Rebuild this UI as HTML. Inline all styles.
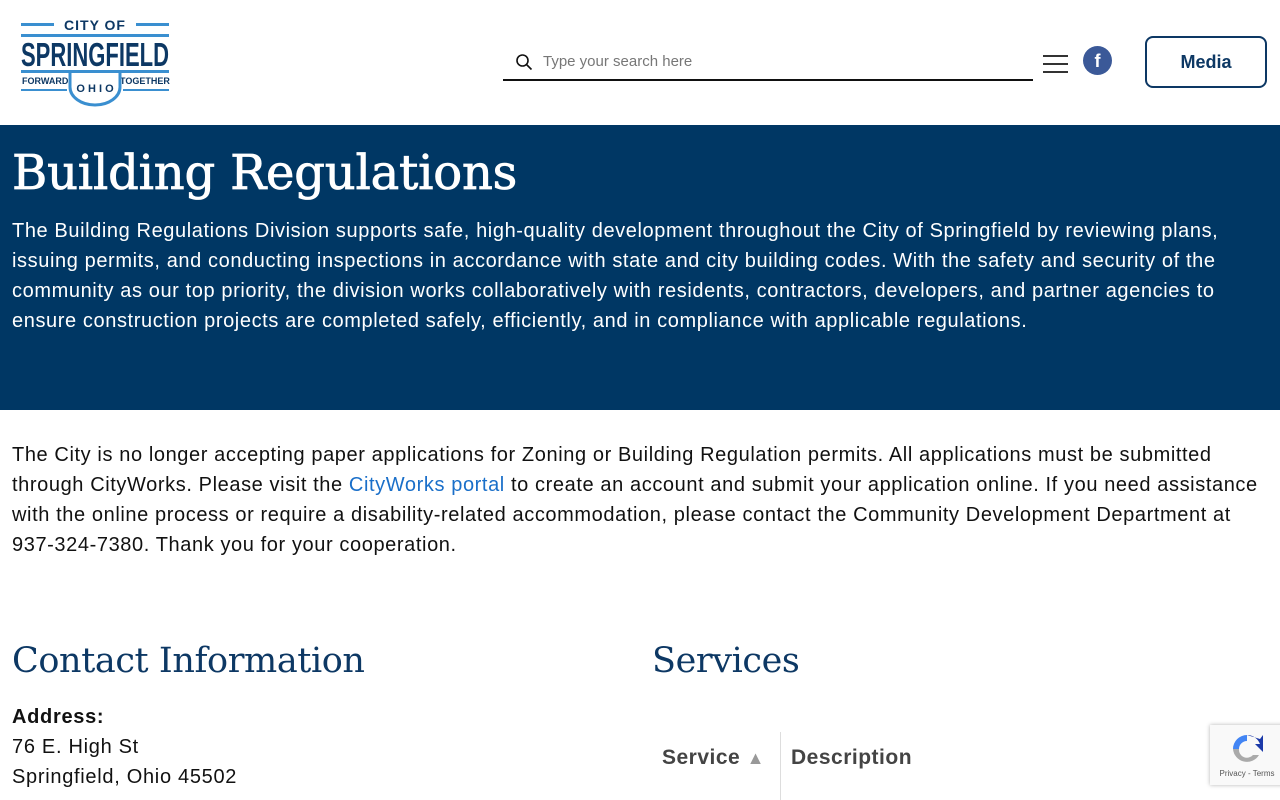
<!DOCTYPE html>
<html><head><meta charset="utf-8"><style>
body{margin:0;width:1280px;height:800px;overflow:hidden;font-family:"Liberation Sans",Arial,sans-serif;background:#fff;color:#111}
.hdr{height:125px;position:relative}
.logo{position:absolute;left:20px;top:17px;width:150px;height:90px}
.search{position:absolute;left:503px;top:44px;width:530px;height:35px;border-bottom:2px solid #111}
.search span{position:absolute;left:40px;top:9px;font-size:15px;color:#777}
.burger{position:absolute;left:1043px;top:55px;width:25px}
.burger i{display:block;height:2px;background:#333;margin-bottom:6px}
.fb{position:absolute;left:1083px;top:46px;width:29px;height:29px;border-radius:50%;background:#3b5998;color:#fff;font-weight:bold;font-size:18px;text-align:center;line-height:30px}
.media{position:absolute;left:1145px;top:36px;width:122px;height:52px;box-sizing:border-box;border:2px solid #0d3864;border-radius:8px;text-align:center;line-height:48px;font-weight:bold;font-size:18px;color:#0d3864}
.hero{background:#003764;height:285px;color:#fff;padding:0 12px;box-sizing:border-box}
h1{font-family:"DejaVu Serif","Liberation Serif",serif;font-weight:normal;font-size:48px;margin:0;padding-top:143px;line-height:60px;position:absolute;top:0;letter-spacing:-0.2px;-webkit-text-stroke:0.8px #fff}
.hero p{margin:0;padding-top:91px;font-size:20px;line-height:30px;letter-spacing:0.6px}
.notice{padding:30px 12px 0;font-size:20px;line-height:30px;margin:0;letter-spacing:0.6px}
a{color:#1a6fc9;text-decoration:none}
h2{font-family:"DejaVu Serif","Liberation Serif",serif;font-weight:normal;font-size:35px;color:#0d3864;margin:0;position:absolute;top:641px;letter-spacing:-0.4px}
.addr{position:absolute;left:12px;top:702px;font-size:20px;line-height:30px;letter-spacing:0.7px}
.th{position:absolute;top:746px;font-weight:bold;font-size:21px;color:#444;letter-spacing:0.5px}
.rc{position:absolute;left:1210px;top:725px;width:74px;height:60px;background:#f9f9f9;box-shadow:0 0 4px rgba(0,0,0,.3);font-size:8px;color:#555;text-align:center}
</style></head><body>
<div class="hdr">
<svg class="logo" viewBox="0 0 150 90">
<rect x="1" y="6" width="33" height="3" fill="#3a8fd0"/><rect x="116" y="6" width="33" height="3" fill="#3a8fd0"/>
<text x="75" y="13" text-anchor="middle" font-family="Liberation Sans" font-weight="bold" font-size="14" fill="#0d3864" letter-spacing="1">CITY OF</text>
<rect x="1" y="17" width="148" height="3" fill="#3a8fd0"/>
<text x="75" y="49" text-anchor="middle" font-family="Liberation Sans Narrow,Liberation Sans" font-weight="bold" font-size="33" fill="#0d3864" textLength="148" lengthAdjust="spacingAndGlyphs">SPRINGFIELD</text>
<rect x="1" y="53" width="148" height="3" fill="#3a8fd0"/>
<text x="2" y="67" font-family="Liberation Sans" font-weight="bold" font-size="9" fill="#0d3864">FORWARD</text>
<text x="100" y="67" font-family="Liberation Sans" font-weight="bold" font-size="9" fill="#0d3864">TOGETHER</text>
<rect x="1" y="72" width="46" height="2" fill="#3a8fd0"/><rect x="103" y="72" width="46" height="2" fill="#3a8fd0"/>
<path d="M50 56 v14 a25 18 0 0 0 50 0 v-14" fill="none" stroke="#3a8fd0" stroke-width="3"/>
<text x="75" y="75" text-anchor="middle" font-family="Liberation Sans" font-weight="bold" font-size="11" fill="#0d3864">O H I O</text>
</svg>
<div class="search"><svg style="position:absolute;left:12px;top:9px" width="18" height="18" viewBox="0 0 18 18"><circle cx="7.5" cy="7.5" r="5.5" fill="none" stroke="#111" stroke-width="1.6"/><path d="M11.5 11.5l5 5" stroke="#111" stroke-width="1.6"/></svg><span>Type your search here</span></div>
<div class="burger"><i></i><i></i><i></i></div>
<div class="fb">f</div>
<div class="media">Media</div>
</div>
<div class="hero"><h1>Building Regulations</h1><p>The Building Regulations Division supports safe, high-quality development throughout the City of Springfield by reviewing plans, issuing permits, and conducting inspections in accordance with state and city building codes. With the safety and security of the community as our top priority, the division works collaboratively with residents, contractors, developers, and partner agencies to ensure construction projects are completed safely, efficiently, and in compliance with applicable regulations.</p></div>
<p class="notice">The City is no longer accepting paper applications for Zoning or Building Regulation permits. All applications must be submitted through CityWorks. Please visit the <a>CityWorks portal</a> to create an account and submit your application online. If you need assistance with the online process or require a disability-related accommodation, please contact the Community Development Department at 937-324-7380. Thank you for your cooperation.</p>
<h2 style="left:12px">Contact Information</h2>
<h2 style="left:652px">Services</h2>
<div class="addr"><b>Address:</b><br>76 E. High St<br>Springfield, Ohio 45502</div>
<div class="th" style="left:662px">Service <span style="color:#999;font-size:18px">▲</span></div>
<div style="position:absolute;left:780px;top:732px;width:1px;height:68px;background:#ddd"></div>
<div class="th" style="left:791px">Description</div>
<div class="rc"><svg width="36" height="36" viewBox="0 0 36 36" style="margin-top:6px"><path d="M18 4a14 14 0 0 1 13 9h-5l8 8V4l-3 4" fill="#1c3aa9"/><path d="M4 18A14 14 0 0 1 18 4v6a8 8 0 0 0-8 8z" fill="#4285f4"/><path d="M4 18a14 14 0 0 0 26 6h-6a8 8 0 0 1-14-6z" fill="#aaa"/></svg><div>Privacy - Terms</div></div>
</body></html>
